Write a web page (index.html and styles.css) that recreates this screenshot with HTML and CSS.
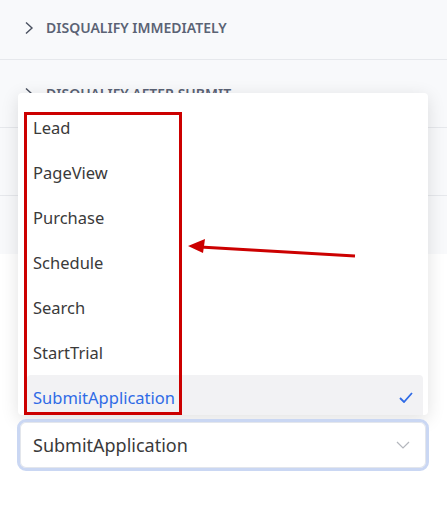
FILE: index.html
```html
<!DOCTYPE html>
<html lang="en">
<head>
  <meta charset="UTF-8">
  <meta name="viewport" content="width=device-width, initial-scale=1.0">
  <title>Pixel Event Settings</title>
  <link rel="stylesheet" href="styles.css">
</head>
<body>
  <div class="panel">
    <!-- Collapsible rule sections -->
    <div class="sections">
      <div class="section-row">
        <svg class="chevron-right" width="10" height="14" viewBox="0 0 10 14"><path d="M2 1.5 L8 7 L2 12.5" fill="none" stroke="#4a5160" stroke-width="1.4"/></svg>
        <span>Disqualify immediately</span>
      </div>
      <div class="section-row tall">
        <svg class="chevron-right" width="10" height="14" viewBox="0 0 10 14"><path d="M2 1.5 L8 7 L2 12.5" fill="none" stroke="#4a5160" stroke-width="1.4"/></svg>
        <span>Disqualify after submit</span>
      </div>
      <div class="section-row tall"></div>
      <div class="section-row last"></div>
    </div>

    <div class="field">
      <!-- Event dropdown (open) -->
      <div class="dropdown">
        <div class="option">Lead</div>
        <div class="option">PageView</div>
        <div class="option">Purchase</div>
        <div class="option">Schedule</div>
        <div class="option">Search</div>
        <div class="option">StartTrial</div>
        <div class="option selected">
          <span>SubmitApplication</span>
          <svg width="14" height="11" viewBox="0 0 14 11"><path d="M1 6 L5 10 L13 1" fill="none" stroke="#2f6be6" stroke-width="1.8"/></svg>
        </div>
      </div>

      <div class="select">
        <span>SubmitApplication</span>
        <svg width="14" height="8" viewBox="0 0 14 8"><path d="M1 1 L7 7 L13 1" fill="none" stroke="#b4b7bd" stroke-width="1.2"/></svg>
      </div>
    </div>
  </div>

  <!-- Highlight markers -->
  <div class="mark-box"></div>
  <svg class="mark-arrow" width="447" height="507" viewBox="0 0 447 507">
    <line x1="355" y1="256" x2="200" y2="247" stroke="#cc0000" stroke-width="3"/>
    <polygon points="188,246 205,239 203,253" fill="#cc0000"/>
  </svg>
</body>
</html>
```
FILE: styles.css
```css
body {
  margin: 0;
  font-family: "Noto Sans", "Open Sans", sans-serif;
  background: #fff;
  color: #333;
  width: 447px;
  height: 507px;
  overflow: hidden;
  position: relative;
}

.sections {
  background: #f8f9fb;
}

.section-row {
  height: 60px;
  box-sizing: border-box;
  padding: 0 0 4px 24px;
  display: flex;
  align-items: center;
  gap: 12px;
  border-bottom: 1px solid #e6e8ec;
  font-size: 14px;
  font-weight: 600;
  text-transform: uppercase;
  color: #5b6375;
}

.section-row.tall {
  height: 68px;
  padding-bottom: 0;
}

.section-row.last {
  height: 58px;
  border-bottom: none;
}

.field {
  position: absolute;
  top: 93px;
  left: 17px;
  width: 412px;
}

.dropdown {
  margin-left: 1px;
  width: 410px;
  height: 322px;
  box-sizing: border-box;
  padding: 12px 5px 0 9px;
  background: #fff;
  border-radius: 4px;
  box-shadow: 0 4px 18px rgba(0, 0, 0, 0.12);
  overflow: hidden;
}

.option {
  height: 45px;
  display: flex;
  align-items: center;
  justify-content: space-between;
  padding: 0 10px 0 6px;
  font-size: 16.5px;
  color: #3a3a3a;
}

.option.selected {
  background: #f2f2f4;
  border-radius: 4px;
  color: #2f6be6;
}

.select {
  margin-top: 4px;
  height: 52px;
  box-sizing: border-box;
  display: flex;
  align-items: center;
  justify-content: space-between;
  padding: 0 16px 0 13px;
  border: 3px solid #cad7f3;
  border-radius: 9px;
  background: #fff;
  box-shadow: inset 0 0 0 1px #e3e6ec;
  font-size: 18px;
  color: #3a3a3a;
}

.mark-box {
  position: absolute;
  left: 24px;
  top: 112px;
  width: 158px;
  height: 303px;
  box-sizing: border-box;
  border: 3px solid #cc0000;
}

.mark-arrow {
  position: absolute;
  left: 0;
  top: 0;
}
```
